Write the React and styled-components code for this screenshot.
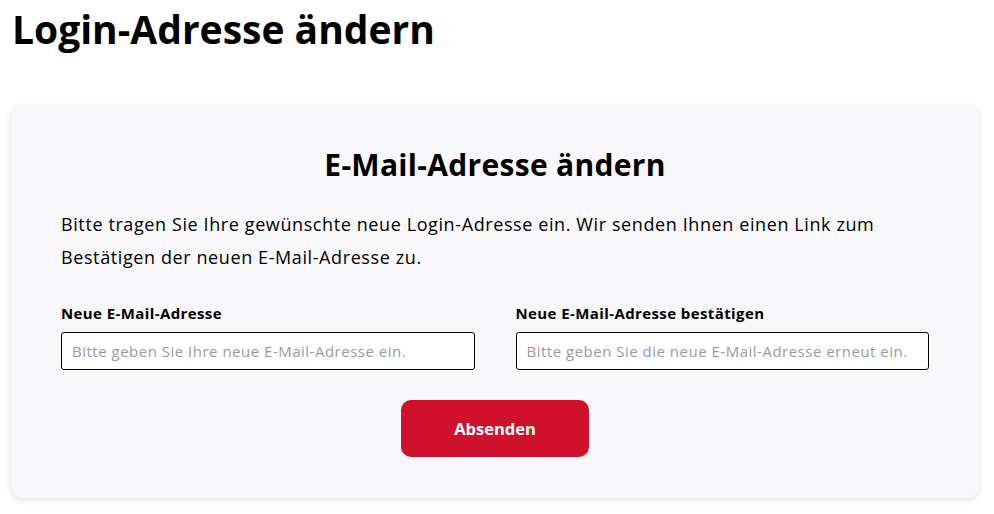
import React from "react";
import styled, { createGlobalStyle } from "styled-components";

const GlobalStyle = createGlobalStyle`
  body {
    margin: 0;
    background: #ffffff;
    font-family: "Open Sans", "Noto Sans", sans-serif;
    color: #000;
  }
`;

const fields = [
  {
    id: 0,
    label: "Neue E-Mail-Adresse",
    placeholder: "Bitte geben Sie Ihre neue E-Mail-Adresse ein.",
  },
  {
    id: 1,
    label: "Neue E-Mail-Adresse bestätigen",
    placeholder: "Bitte geben Sie die neue E-Mail-Adresse erneut ein.",
  },
];

const App = () => {
  return (
    <Page>
      <GlobalStyle />
      <PageTitle>Login-Adresse ändern</PageTitle>
      <Card>
        <CardTitle>E-Mail-Adresse ändern</CardTitle>
        <Intro>
          Bitte tragen Sie Ihre gewünschte neue Login-Adresse ein. Wir senden
          Ihnen einen Link zum Bestätigen der neuen E-Mail-Adresse zu.
        </Intro>
        <Fields>
          {fields.map((field) => (
            <Field key={field.id}>
              <Label>{field.label}</Label>
              <Input placeholder={field.placeholder} />
            </Field>
          ))}
        </Fields>
        <Actions>
          <SubmitButton>Absenden</SubmitButton>
        </Actions>
      </Card>
    </Page>
  );
};

export default App;

const Page = styled.div`
  padding: 4px 15px 16px 11px;
`;

const PageTitle = styled.h1`
  margin: 0 0 50px 1px;
  font-size: 39px;
  line-height: 50px;
  font-weight: 700;
`;

const Card = styled.div`
  background: #f8f8fa;
  border-radius: 12px;
  box-shadow: 0 2px 6px rgba(0, 0, 0, 0.12);
  padding: 41px 50px 41px;
`;

const CardTitle = styled.h2`
  margin: 0 0 23px;
  text-align: center;
  font-size: 30px;
  line-height: 40px;
  font-weight: 700;
  letter-spacing: 0.3px;
`;

const Intro = styled.p`
  margin: 0 0 29px;
  max-width: 830px;
  font-size: 18px;
  line-height: 33px;
  letter-spacing: 0.6px;
`;

const Fields = styled.div`
  display: grid;
  grid-template-columns: 1fr 1fr;
  gap: 41px;
`;

const Field = styled.div`
  display: flex;
  flex-direction: column;
`;

const Label = styled.label`
  font-size: 15px;
  font-weight: 700;
  line-height: 20px;
  margin-bottom: 9px;
  letter-spacing: 0.4px;
`;

const Input = styled.input`
  box-sizing: border-box;
  height: 38px;
  width: 100%;
  padding: 0 10px;
  border: 1px solid #000;
  border-radius: 3px;
  background: #fff;
  font-family: "Open Sans", "Noto Sans", sans-serif;
  font-size: 15px;
  letter-spacing: 0.5px;
  &::placeholder {
    color: #9a9a9a;
  }
`;

const Actions = styled.div`
  display: flex;
  justify-content: center;
  margin-top: 30px;
`;

const SubmitButton = styled.button`
  width: 188px;
  height: 57px;
  border: none;
  border-radius: 10px;
  background: #d0112b;
  color: #fff;
  font-family: "Open Sans", "Noto Sans", sans-serif;
  font-size: 16.5px;
  font-weight: 700;
  cursor: pointer;
`;
